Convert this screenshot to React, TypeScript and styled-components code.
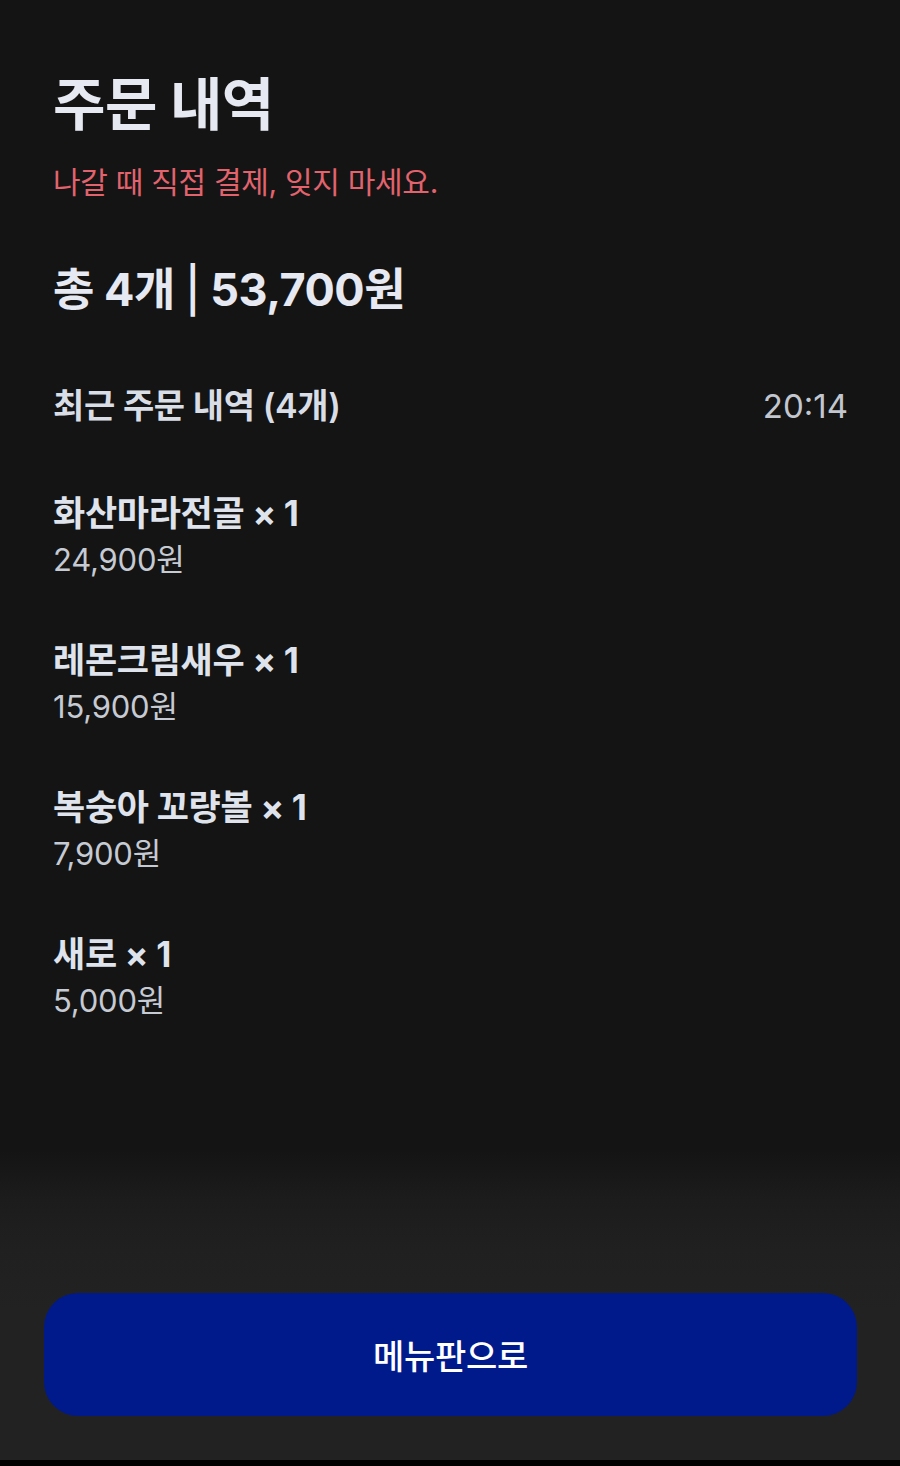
import React from "react";
import styled, { createGlobalStyle } from "styled-components";

const GlobalStyle = createGlobalStyle`
  html, body {
    margin: 0;
    padding: 0;
    background: #141414;
  }
  body {
    font-family: Inter, "Noto Sans CJK KR", "Noto Sans", sans-serif;
    -webkit-font-smoothing: antialiased;
  }
  * { box-sizing: border-box; }
`;

const Page = styled.div`
  width: 900px;
  height: 1466px;
  display: flex;
  flex-direction: column;
  background: #141414;
`;

const Content = styled.main`
  flex: 1;
  display: flex;
  flex-direction: column;
  padding: 70px 53px 0 53px;
`;

const Title = styled.h1`
  margin: 0;
  font-size: 57px;
  font-weight: 700;
  line-height: 70px;
  color: #e6e9f1;
  letter-spacing: -0.5px;
`;

const Notice = styled.p`
  margin: 22px 0 0 0;
  font-size: 30px;
  font-weight: 400;
  line-height: 40px;
  color: #e2636d;
  letter-spacing: -0.3px;
`;

const Total = styled.h2`
  margin: 58px 0 0 0;
  font-size: 45px;
  font-weight: 700;
  line-height: 60px;
  color: #e6e9f1;
  letter-spacing: -0.5px;
`;

const Divider = styled.span`
  font-weight: 500;
`;

const SectionHeader = styled.div`
  margin-top: 64px;
  display: flex;
  justify-content: space-between;
  align-items: center;
`;

const SectionTitle = styled.span`
  font-size: 34px;
  font-weight: 600;
  line-height: 44px;
  color: #d9dde6;
  letter-spacing: -0.4px;
`;

const Time = styled.span`
  font-size: 33px;
  font-weight: 400;
  line-height: 44px;
  color: #c2c6ce;
  margin-right: -1px;
`;

const List = styled.ul`
  list-style: none;
  margin: 64px 0 0 0;
  padding: 0;
  display: flex;
  flex-direction: column;
  gap: 60px;
`;

const Item = styled.li`
  display: flex;
  flex-direction: column;
  gap: 7px;
`;

const ItemName = styled.span`
  font-size: 35px;
  font-weight: 700;
  line-height: 42px;
  color: #dfe3ec;
  letter-spacing: -0.3px;
`;

const ItemPrice = styled.span`
  font-size: 31px;
  font-weight: 400;
  line-height: 38px;
  color: #c6cad3;
  letter-spacing: -0.2px;
`;

const Footer = styled.footer`
  height: 310px;
  padding: 143px 43px 44px 44px;
  background: linear-gradient(to bottom, #141414 0px, #1c1c1c 50px, #202020 100px, #222222 160px);
  display: flex;
`;

const MenuButton = styled.button`
  flex: 1;
  height: 123px;
  border: none;
  border-radius: 34px;
  background: #001a8c;
  color: #ffffff;
  font-family: inherit;
  font-size: 34px;
  font-weight: 500;
  letter-spacing: -0.3px;
  cursor: pointer;
`;

const BottomBar = styled.div`
  height: 6px;
  background: #000000;
`;

const items = [
  { name: "화산마라전골", qty: 1, price: "24,900원" },
  { name: "레몬크림새우", qty: 1, price: "15,900원" },
  { name: "복숭아 꼬량볼", qty: 1, price: "7,900원" },
  { name: "새로", qty: 1, price: "5,000원" },
];

export default function App() {
  return (
    <>
      <GlobalStyle />
      <Page>
        <Content>
          <Title>주문 내역</Title>
          <Notice>나갈 때 직접 결제, 잊지 마세요.</Notice>
          <Total>
            총 4개 <Divider>|</Divider> 53,700원
          </Total>
          <SectionHeader>
            <SectionTitle>최근 주문 내역 (4개)</SectionTitle>
            <Time>20:14</Time>
          </SectionHeader>
          <List>
            {items.map((it) => (
              <Item key={it.name}>
                <ItemName>
                  {it.name} × {it.qty}
                </ItemName>
                <ItemPrice>{it.price}</ItemPrice>
              </Item>
            ))}
          </List>
        </Content>
        <Footer>
          <MenuButton>메뉴판으로</MenuButton>
        </Footer>
        <BottomBar />
      </Page>
    </>
  );
}
